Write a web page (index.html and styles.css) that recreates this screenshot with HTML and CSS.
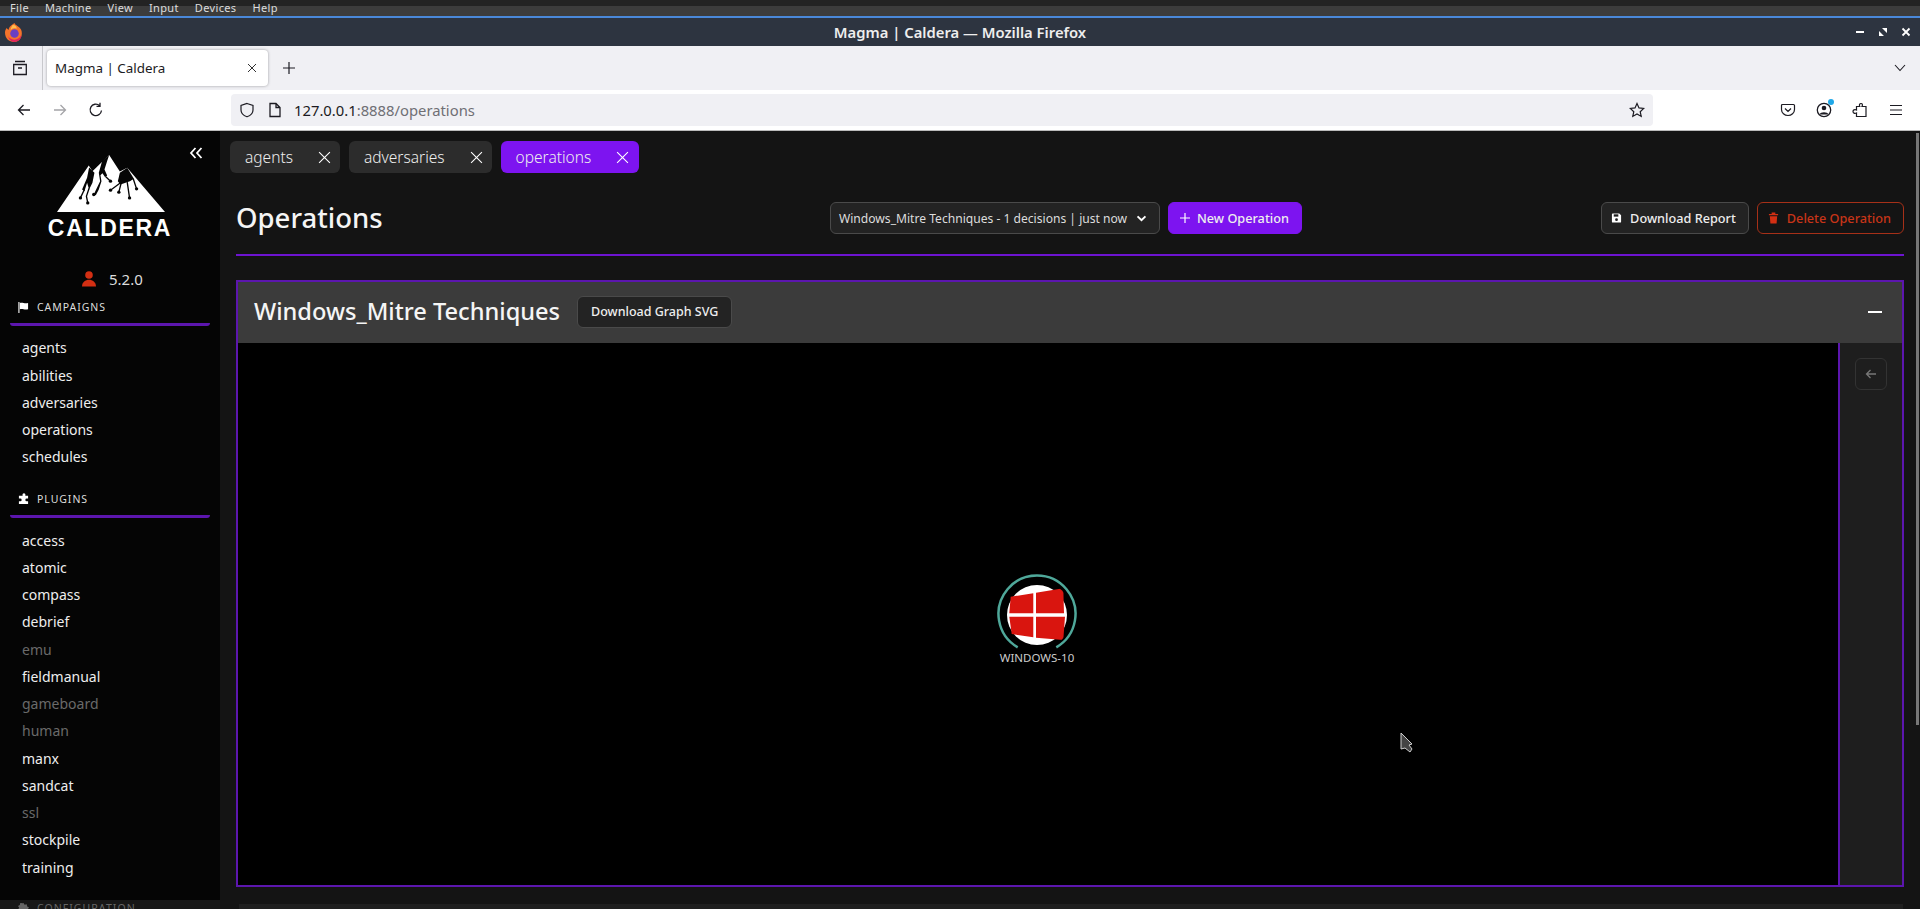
FILE: index.html
```html
<!DOCTYPE html>
<html lang="en">
<head>
<meta charset="utf-8">
<title>Magma | Caldera</title>
<link rel="stylesheet" href="styles.css">
</head>
<body>
<div class="vm-bar"><span>File</span><span>Machine</span><span>View</span><span>Input</span><span>Devices</span><span>Help</span></div>
<header class="titlebar">
  <svg class="fx" viewBox="0 0 20 22"><path d="M10 1c1 3 5 3 7 7 2 5 0 12-7 13C4 21 0 17 0 11c0-2 1-4 2-5 0 1 1 2 2 2 0-3 3-5 6-7z" fill="#f5732b"/><path d="M3 14c1 5 11 7 14 0 1 3-3 7-7 7-4 0-6-3-7-7z" fill="#e0245e"/><circle cx="10" cy="12" r="4.500" fill="#6a3fc4"/><path d="M8 3c3 0 5 2 4 4-3-1-5 0-6 2 0-3 1-4 2-6z" fill="#ffbd4f"/></svg>
  <span class="title-text">Magma | Caldera — Mozilla Firefox</span>
  <div class="winctl">
    <svg viewBox="0 0 10 10"><path d="M1 5h8" stroke="#fff" stroke-width="2"/></svg>
    <svg viewBox="0 0 10 10"><path d="M4 1h5v5zM6 9H1V4z" fill="#fff"/></svg>
    <svg viewBox="0 0 10 10"><path d="M1.500 1.500l7 7M8.500 1.500l-7 7" stroke="#fff" stroke-width="1.800"/></svg>
  </div>
</header>
<div class="tabbar">
  <div class="tabs-side"><svg viewBox="0 0 16 16" class="ico16"><path d="M3 1.500h10M1.700 4.500h12.600v10H1.700zM6 8h4" fill="none" stroke="#1c1b22" stroke-width="1.300"/></svg></div>
  <div class="tab"><span>Magma | Caldera</span><svg viewBox="0 0 10 10"><path d="M1 1l8 8M9 1l-8 8" stroke="#333" stroke-width="1"/></svg></div>
  <svg class="newtab ico16" viewBox="0 0 16 16"><path d="M8 2v12M2 8h12" stroke="#1c1b22" stroke-width="1.200"/></svg>
  <svg class="tablist" viewBox="0 0 12 8"><path d="M1 1l5 5.500L11 1" fill="none" stroke="#1c1b22" stroke-width="1.100"/></svg>
</div>
<nav class="navbar">
  <svg class="ico16" viewBox="0 0 16 16"><path d="M14 8H2.500M7.500 3l-5 5 5 5" fill="none" stroke="#1c1b22" stroke-width="1.300"/></svg>
  <svg class="ico16 nav-btn" viewBox="0 0 16 16"><path d="M2 8h11.500M8.500 3l5 5-5 5" fill="none" stroke="#a4a4a8" stroke-width="1.300"/></svg>
  <svg class="ico16 nav-btn" viewBox="0 0 16 16"><path d="M13.500 8.500A5.700 5.700 0 1 1 11.500 3.500M12 .8v3.500H8.500" fill="none" stroke="#1c1b22" stroke-width="1.300"/></svg>
  <div class="urlbar">
    <svg class="ico16" viewBox="0 0 16 16"><path d="M8 1.500l6 2v4.500c0 3.500-3 5.800-6 6.800-3-1-6-3.300-6-6.800V3.500z" fill="none" stroke="#1c1b22" stroke-width="1.200"/></svg>
    <svg class="ico14" viewBox="0 0 14 16"><path d="M2 1.500h6l4 4v9H2zM8 1.500v4h4" fill="none" stroke="#1c1b22" stroke-width="1.300"/></svg>
    <span class="url"><b>127.0.0.1</b>:8888/operations</span>
    <svg class="ico16 star" viewBox="0 0 16 16"><path d="M8 1.500l2 4.400 4.700.6-3.500 3.200 1 4.700L8 12l-4.200 2.400 1-4.700L1.300 6.500 6 5.900z" fill="none" stroke="#1c1b22" stroke-width="1.200"/></svg>
  </div>
  <div class="nav-right">
    <svg class="ico16" viewBox="0 0 16 16"><path d="M2.500 2.500h11q1 0 1 1v4c0 3.500-3 6-6.500 6s-6.500-2.500-6.500-6v-4q0-1 1-1zM5 6.500l3 3 3-3" fill="none" stroke="#1c1b22" stroke-width="1.200"/></svg>
    <span class="account">
      <svg class="ico16" viewBox="0 0 16 16"><circle cx="8" cy="8" r="6.700" fill="none" stroke="#1c1b22" stroke-width="1.300"/><circle cx="8" cy="6" r="2.300" fill="#1c1b22"/><path d="M3.500 12.500c1-3 8-3 9 0z" fill="#1c1b22"/></svg>
      <i class="dot"></i>
    </span>
    <svg class="ico16" viewBox="0 0 16 16"><path d="M9 1.500c-1.500 0-2 1.500-1.200 3H4.500v3.500c-2-.8-3.500 0-3.500 1.500s1.500 2.300 3.500 1.500v3.500h9.500V4.500h-4c.8-1.500.5-3-1-3z" fill="none" stroke="#1c1b22" stroke-width="1.200"/></svg>
    <svg class="ico16" viewBox="0 0 16 16"><path d="M2 3.500h12M2 8h12M2 12.500h12" stroke="#1c1b22" stroke-width="1.200"/></svg>
  </div>
</nav>
<div class="app">
  <aside class="sidebar">
    <div class="side-main">
      <div class="brand">
        <svg class="collapse" viewBox="0 0 14 12"><path d="M6.500 1L2 6l4.500 5M12.500 1L8 6l4.500 5" fill="none" stroke="#fff" stroke-width="1.800"/></svg>
        <svg class="logo" viewBox="80 47 323 170">
          <path d="M80 217L175 78l11 17 50-48 32 49 22-11 113 132z" fill="#fff"/>
          <g fill="#050505">
            <path d="M176 84l16 16-6 30-10 20-6-20-8 25-7-5 15-35z"/>
            <path d="M236 47l-21 18-10 35 4 25-12 25-7 15 6 2 9-17 8-25-3-18 6-6 8 12 6-5-8-18 8-25z"/>
            <path d="M290 85l-22 15-6 25 8 10 15-5 13-5 12-7z"/>
            <circle cx="150" cy="175" r="5"/><circle cx="172" cy="190" r="5"/><circle cx="190" cy="165" r="5"/><circle cx="240" cy="125" r="5"/>
            <circle cx="240" cy="152" r="5"/><circle cx="265" cy="158" r="5"/><circle cx="297" cy="175" r="5"/><circle cx="318" cy="148" r="5"/>
          </g>
          <path d="M162 150l-12 25M176 146l-8 24 4 20M226 112l14 13M270 130l-30 22M272 130l-7 28M290 128l7 47M308 118l10 30" fill="none" stroke="#050505" stroke-width="4"/>
        </svg>
        <div class="wordmark">CALDERA</div>
        <div class="version">
          <svg viewBox="0 0 14 16"><circle cx="7" cy="4" r="3.800" fill="#d32f13"/><path d="M0 15.500c0-9 14-9 14 0z" fill="#d32f13"/></svg>
          <span>5.2.0</span>
        </div>
      </div>
      <div class="menu-label campaigns">
        <svg viewBox="0 0 12 12"><path d="M1 0v12" stroke="#fff" stroke-width="1.200"/><path d="M2 1c3-1 5 1 9 0v7c-4 1-6-1-9 0z" fill="#fff"/></svg>
        <span>CAMPAIGNS</span>
      </div>
      <ul class="menu-list first">
        <li>agents</li><li>abilities</li><li>adversaries</li><li>operations</li><li>schedules</li>
      </ul>
      <div class="menu-label plugins">
        <svg viewBox="0 0 12 12"><path d="M5 1q1.500-1.500 3 0v2h3v3H9.500q-1.500 0-1.500 1.500T9.500 9H11v3H1V9h1.500Q4 9 4 7.500T2.500 6H1V3h4z" fill="#fff"/></svg>
        <span>PLUGINS</span>
      </div>
      <ul class="menu-list second">
        <li>access</li><li>atomic</li><li>compass</li><li>debrief</li><li class="off">emu</li><li>fieldmanual</li><li class="off">gameboard</li><li class="off">human</li><li>manx</li><li>sandcat</li><li class="off">ssl</li><li>stockpile</li><li>training</li>
      </ul>
    </div>
    <div class="side-foot">
      <svg viewBox="0 0 12 12"><path d="M6 0l1.200 2 2.300-.6.500 2.300 2 1.300-1.300 1.800 1.300 1.800-2 1.300-.5 2.300-2.300-.6L6 12l-1.200-2-2.300.6L2 8.300 0 7l1.300-1.800L0 3.400 2 2.100l.5-2.300 2.300.6z" fill="#666"/></svg>
      <span>CONFIGURATION</span>
    </div>
  </aside>
  <main class="main">
    <div class="page-tabs">
      <div class="ptab"><span>agents</span><svg viewBox="0 0 12 12"><path d="M1 1l10 10M11 1L1 11" stroke="#fff" stroke-width="1"/></svg></div>
      <div class="ptab"><span>adversaries</span><svg viewBox="0 0 12 12"><path d="M1 1l10 10M11 1L1 11" stroke="#fff" stroke-width="1"/></svg></div>
      <div class="ptab active"><span>operations</span><svg viewBox="0 0 12 12"><path d="M1 1l10 10M11 1L1 11" stroke="#fff" stroke-width="1"/></svg></div>
    </div>
    <div class="op-head">
      <h1>Operations</h1>
      <div class="op-center">
        <div class="select"><span>Windows_Mitre Techniques - 1 decisions | just now</span><svg viewBox="0 0 12 8"><path d="M1.500 1.500L6 6l4.500-4.500" fill="none" stroke="#fff" stroke-width="2.200"/></svg></div>
        <button class="btn primary"><svg viewBox="0 0 12 12"><path d="M6 1v10M1 6h10" stroke="#fff" stroke-width="1.200"/></svg>New Operation</button>
      </div>
      <div class="op-right">
        <button class="btn"><svg viewBox="0 0 12 12"><path d="M1 2q0-1 1-1h7l2 2v7q0 1-1 1H2q-1 0-1-1z" fill="#fff"/><rect x="3" y="2" width="5" height="2.500" fill="#1f1f1f"/><circle cx="6" cy="7.800" r="1.500" fill="#1f1f1f"/></svg>Download Report</button>
        <button class="btn danger"><svg viewBox="0 0 12 13"><path d="M1 2h10v1.500H1zM4 .5h4V2H4zM2 4.500h8l-.6 8H2.600z" fill="#d32f13"/></svg>Delete Operation</button>
      </div>
    </div>
    <hr class="rule">
    <section class="panel">
      <div class="panel-head">
        <h2>Windows_Mitre Techniques</h2>
        <button class="btn small">Download Graph SVG</button>
        <svg class="minus" viewBox="0 0 14 2"><path d="M0 1h14" stroke="#fff" stroke-width="2"/></svg>
      </div>
      <div class="panel-body">
        <div class="graph">
          <div class="node">
            <svg viewBox="0 0 80 78">
              <defs><clipPath id="winclip"><circle cx="40" cy="41" r="35"/></clipPath></defs>
              <path d="M20.700 73.300A38.500 38.500 0 1 1 59.300 73.300" fill="none" stroke="#4fa89a" stroke-width="2.500"/>
              <circle cx="40" cy="41" r="30" fill="#fff"/>
              <path d="M13.700 22.700l22.600-3.400v20H12.300zM39 18.700l27.300-4.400.7 25H39zM12.300 42.700h24v20.600L14.700 60zM39 42.700h29l-1.700 23.300L39 63.700z" fill="#d9150f" clip-path="url(#winclip)"/>
            </svg>
            <span>WINDOWS-10</span>
          </div>
          <svg class="cursor" viewBox="0 0 13 21"><path d="M1 1v16l4-1 5 4 2-3-3-4 3-1z" fill="#444" stroke="#ccc" stroke-width="1"/></svg>
        </div>
        <div class="side-rail">
          <button class="rail-btn"><svg viewBox="0 0 12 10"><path d="M11 5H1.500M5.500 1l-4 4 4 4" fill="none" stroke="#777" stroke-width="1.300"/></svg></button>
        </div>
      </div>
    </section>
    <div class="next-panel"></div>
    <div class="scrollthumb"></div>
  </main>
</div>
</body>
</html>
```
FILE: styles.css
```css
* { box-sizing: border-box; }
html, body { margin: 0; height: 909px; overflow: hidden; }
body { font-family: "Noto Sans", "Open Sans", sans-serif; background: #141414; color: #fff; display: flex; flex-direction: column; }
svg { display: block; flex: none; }
button { font-family: inherit; }
.ico16 { width: 16px; height: 16px; }
.ico14 { width: 14px; height: 16px; }

.vm-bar { height: 16px; flex: none; display: flex; gap: 16px; padding: 0 10px; background: linear-gradient(#232323 0 6px, #3c3c3c 6px); font-size: 11px; letter-spacing: .35px; line-height: 15px; color: #ddd; }
.titlebar { height: 30px; flex: none; border-top: 2px solid #4a88d8; background: #2d3440; display: flex; align-items: center; justify-content: center; position: relative; }
.title-text { font-size: 14.800px; font-weight: 600; color: #eee; }
.fx { position: absolute; left: 5px; top: 4px; width: 19px; height: 21px; }
.winctl { position: absolute; right: 9px; top: 9px; display: flex; gap: 13px; }
.winctl svg { width: 10px; height: 10px; }

.tabbar { height: 44px; flex: none; background: #f0f0f4; display: flex; align-items: center; color: #1c1b22; }
.tabs-side { width: 43px; height: 44px; border-right: 1px solid #c8c8cc; display: flex; align-items: center; padding-left: 12px; }
.tab { width: 221px; height: 36px; margin-left: 4px; background: #fff; border-radius: 4px; box-shadow: 0 0 3px rgba(0,0,0,.35); display: flex; align-items: center; justify-content: space-between; padding: 0 11px 0 8px; font-size: 13.400px; }
.tab svg { width: 10px; height: 10px; }
.newtab { margin-left: 13px; }
.tablist { width: 12px; height: 8px; margin-left: auto; margin-right: 14px; }

.navbar { height: 41px; flex: none; background: #fff; border-bottom: 1px solid #bbb; display: flex; align-items: center; padding-left: 16px; color: #1c1b22; }
.nav-btn { margin-left: 20px; }
.urlbar { width: 1422px; height: 32px; margin-left: 127px; background: #f0f0f4; border-radius: 4px; display: flex; align-items: center; padding: 0 8px; gap: 12.500px; font-size: 14.800px; }
.url { color: #6f6f74; }
.url b { font-weight: 400; color: #1c1b22; }
.star { margin-left: auto; }
.nav-right { display: flex; gap: 20px; margin-left: 127px; align-items: center; }
.account { position: relative; display: block; }
.dot { position: absolute; right: -2px; top: -3px; width: 6px; height: 6px; border-radius: 50%; background: #1fa8e8; }

.app { flex: 1; display: flex; min-height: 0; }
.sidebar { width: 220px; flex: none; background: #171717; overflow: hidden; }
.side-main { height: 769px; background: #050505; }
.brand { position: relative; padding-top: 24px; padding-bottom: 6px; }
.collapse { position: absolute; left: 189px; top: 16px; width: 14px; height: 12px; }
.logo { width: 108px; height: 57px; margin-left: 57px; }
.wordmark { font-family: "Liberation Sans", sans-serif; font-weight: 700; font-size: 23px; line-height: 24px; letter-spacing: 1.700px; text-align: center; width: 220px; margin-top: 4px; }
.version { display: flex; align-items: center; gap: 13px; margin-top: 28px; padding-left: 82px; font-size: 15px; line-height: 22px; color: #ddd; }
.version svg { width: 14px; height: 16px; }

.menu-label { display: flex; align-items: center; gap: 8px; margin: 0 10px; padding-left: 8px; border-bottom: 3px solid #5c16ae; border-radius: 0 0 3px 3px; font-size: 10.500px; letter-spacing: .95px; color: #ddd; }
.menu-label svg { width: 11px; height: 11px; }
.menu-label.campaigns { height: 30px; padding-bottom: 5px; }
.menu-label.plugins { margin-top: 14px; height: 33px; padding-bottom: 1.500px; }
.menu-list { list-style: none; margin: 0; padding: 0 0 0 22px; font-size: 14px; }
.menu-list.first { margin-top: 8.400px; }
.menu-list.second { margin-top: 8.900px; }
.menu-list li { height: 27.250px; line-height: 27px; color: #eee; }
.menu-list li.off { color: #6a6a6a; }
.side-foot { display: flex; align-items: center; gap: 8px; padding-left: 18px; height: 16px; font-size: 10.500px; letter-spacing: 1.050px; color: #666; }
.side-foot svg { width: 11px; height: 11px; }

.main { flex: 1; min-width: 0; padding: 10px 16px 0; position: relative; background: #141414; overflow: hidden; }
.page-tabs { display: flex; gap: 9px; margin-left: -6px; height: 32px; }
.ptab { height: 32px; display: flex; align-items: center; gap: 25px; padding: 0 9px 0 15px; border-radius: 6px; background: #2c2c2c; font-size: 15.500px; font-weight: 300; color: #eee; }
.ptab svg { width: 13px; height: 13px; }
.ptab.active { background: #7d14f0; padding-right: 10px; }
.op-head { display: flex; align-items: center; height: 32px; margin-top: 29px; }
.op-head h1 { margin: 0; font-size: 27.500px; font-weight: 500; line-height: 32px; color: #f5f5f5; width: 594px; }
.op-center { display: flex; gap: 8px; }
.op-right { display: flex; gap: 8px; margin-left: auto; }
.select { width: 330px; height: 32px; display: flex; align-items: center; justify-content: space-between; padding: 0 12px 0 8px; background: #232323; border: 1px solid #4a4a4a; border-radius: 6px; font-size: 12.100px; color: #ddd; }
.select span { white-space: nowrap; }
.select svg { width: 11px; height: 7px; }
.btn { height: 32px; padding: 0 12px 0 9px; display: inline-flex; align-items: center; gap: 8px; background: #232323; border: 1px solid #4a4a4a; border-radius: 6px; color: #eee; font-size: 12.700px; font-weight: 500; white-space: nowrap; }
.btn svg { width: 11px; height: 12px; }
.btn.primary { background: #7d14f0; border-color: #7d14f0; padding: 0 12px 0 10px; gap: 6px; }
.btn.primary svg { width: 12px; }
.btn.danger { background: #141414; border-color: #a63018; color: #c83418; padding: 0 12px 0 10px; }
.rule { border: 0; height: 2px; background: #6d14d0; margin: 20px 0 24px; }
.panel { border: 2px solid #5c16ae; height: 607px; display: flex; flex-direction: column; background: #1e1e1e; }
.panel-head { height: 61px; flex: none; display: flex; align-items: center; background: #3b3b3b; padding: 0 20px 2px 16px; gap: 17px; }
.panel-head h2 { margin: 0 0 1px; font-size: 23.600px; font-weight: 500; color: #f5f5f5; }
.btn.small { height: 32px; font-size: 12.500px; padding: 0 13px; }
.minus { width: 14px; height: 2px; margin-left: auto; }
.panel-body { flex: 1; display: flex; min-height: 0; }
.graph { flex: 1; background: #000; position: relative; border-right: 2px solid #5c16ae; }
.node { position: absolute; left: 759px; top: 231px; width: 80px; display: flex; flex-direction: column; align-items: center; }
.node svg { width: 80px; height: 78px; }
.node span { font-size: 11.500px; line-height: 13px; margin-top: -1px; color: #ccc; white-space: nowrap; }
.cursor { position: absolute; left: 1162px; top: 389px; width: 13px; height: 21px; }
.side-rail { width: 62px; flex: none; background: #1e1e1e; padding: 15px 0 0 15px; }
.rail-btn { width: 32px; height: 32px; background: #1e1e1e; border: 1px solid #333; border-radius: 6px; display: flex; align-items: center; justify-content: center; padding: 0; }
.rail-btn svg { width: 12px; height: 10px; }
.next-panel { height: 20px; margin: 17px 1px 0 3px; background: #1f1f1f; }
.scrollthumb { position: absolute; right: 1px; top: 2px; width: 3px; height: 592px; background: #777; }
```
